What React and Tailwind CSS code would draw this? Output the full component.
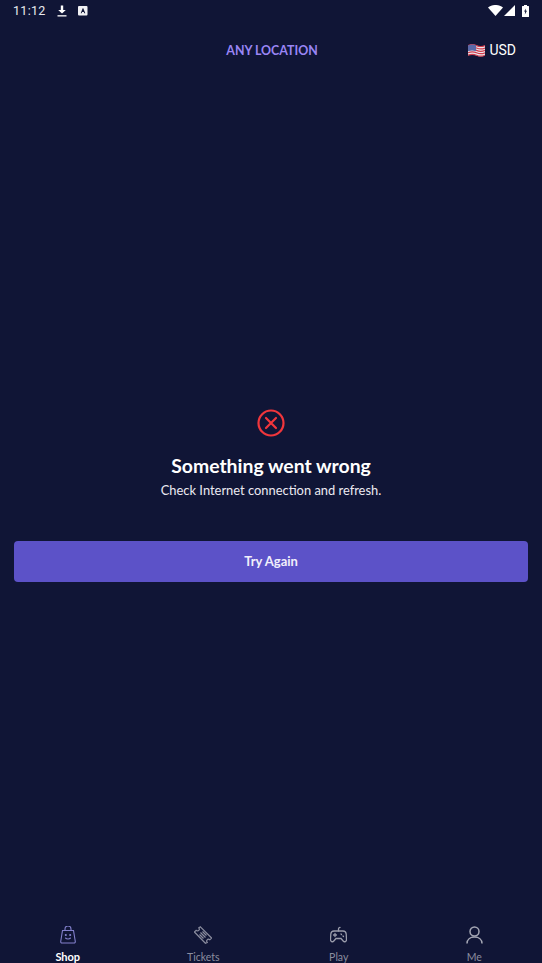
const font = { fontFamily: 'Lato, sans-serif' };

function StatusBar() {
  return (
    <div className="h-[21px] flex items-center justify-between px-[13px] text-white">
      <div className="flex items-center">
        <span className="text-[12.5px] leading-[21px] tracking-[0.3px] font-['Roboto',sans-serif] text-[#e8e9ee]">11:12</span>
        <svg width="10" height="12" viewBox="0 0 10 12" className="ml-[11px]">
          <path d="M3.8 0.5h2.4v4.5h2.6L5 8.6 1.2 5h2.6z" fill="#fff" />
          <rect x="0.5" y="10.2" width="9" height="1.3" fill="#fff" />
        </svg>
        <svg width="10" height="10" viewBox="0 0 10 10" className="ml-[11px]">
          <rect width="9.5" height="9.5" rx="1" fill="#f1f1f4" />
          <path d="M2.7 7.2 4.7 2.2h.6l2 5H6.2l-.4-1.1H4.1l-.4 1.1z" fill="#101536" />
        </svg>
      </div>
      <div className="flex items-center">
        <svg width="15" height="11" viewBox="0 0 15 11">
          <path d="M0 2.600C4.200-.9 10.800-.9 15 2.600L7.500 11z" fill="#fff" />
        </svg>
        <svg width="11" height="11" viewBox="0 0 11 11" className="ml-[1px]">
          <path d="M11 0v11H0z" fill="#fff" />
        </svg>
        <svg width="7" height="12" viewBox="0 0 7 12" className="ml-[7px]">
          <path d="M2 0h3v1h1.500a.5.5 0 0 1 .5.5v10a.5.5 0 0 1-.5.5H.5a.5.5 0 0 1-.5-.5v-10A.5.5 0 0 1 .5 1H2z" fill="#fff" />
          <path d="M4 3.500 2 6.500h1.200L2.800 9.500 5 5.700H3.700z" fill="#101536" />
        </svg>
      </div>
    </div>
  );
}

function Flag() {
  const stripes = [1.6, 4, 6.4, 8.8, 11.2];
  return (
    <svg width="17" height="13" viewBox="0 0 17 13" fill="none">
      <path d="M0 1.500Q4.200-.3 8.500 1.500T17 1.500V11.500Q12.800 13.300 8.500 11.500T0 11.500z" fill="#ece6ea" />
      {stripes.map((y) => (
        <path key={y} d={`M0 ${y}Q4.200 ${y - 1.8} 8.500 ${y}T17 ${y}`} stroke="#cf3a4c" strokeWidth="1.200" />
      ))}
      <path d="M0 1.500Q4-.2 8 1.300V7.200Q4 5.700 0 7.200z" fill="#5a69a8" />
    </svg>
  );
}

function ShopIcon() {
  return (
    <svg width="16" height="18" viewBox="0 0 16 18" fill="none" stroke="#8380cc" strokeWidth="1.100">
      <path d="M2.500 4.500h11L15.300 15.500a1.300 1.300 0 0 1-1.300 1.500H2a1.300 1.300 0 0 1-1.300-1.500z" />
      <path d="M5 4.500V3a3 3 0 0 1 6 0v1.500" />
      <path d="M5.500 12c1.300 1.200 3.700 1.200 5 0" strokeLinecap="round" />
      <circle cx="5.800" cy="9" r=".5" fill="#8380cc" />
      <circle cx="10.200" cy="9" r=".5" fill="#8380cc" />
    </svg>
  );
}

function TicketIcon() {
  return (
    <svg width="18" height="18" viewBox="0 0 18 18" fill="none" stroke="#8b8d9f" strokeWidth="1.200">
      <path d="M6 .8 17.200 12l-1.800 1.800c-.9-.7-2-.6-2.600 0-.7.7-.7 1.700 0 2.600L11 17.200-.0 6l1.800-1.600c.9.7 2 .6 2.600 0 .7-.7.7-1.700 0-2.600z" transform="translate(.4 0)" />
      <path d="m6.500 6.500 5 5M5.500 8.500l4 4M8.500 5.500l4 4" />
    </svg>
  );
}

function PlayIcon() {
  return (
    <svg width="17" height="18" viewBox="0 0 17 18" fill="none" stroke="#9a9cab" strokeWidth="1.300" strokeLinecap="round">
      <path d="M4 5h9c1.800 0 3 1.300 3.200 3l.3 5.500c.1 2-2 3-3.300 1.500L11 12.500H6L3.800 15C2.500 16.500.4 15.500.5 13.500L.8 8C1 6.300 2.200 5 4 5z" />
      <path d="M8.500 5V3.200c0-1.200.6-1.800 1.500-1.800" />
      <path d="M3.500 9h3M5 7.500v3M11 8l.5.500M13 10l.5.500" />
    </svg>
  );
}

function MeIcon() {
  return (
    <svg width="17" height="18" viewBox="0 0 17 18" fill="none" stroke="#a4a6b4" strokeWidth="1.500">
      <circle cx="8.500" cy="5.500" r="4.500" />
      <path d="M1 17.500c0-4 3.200-6.500 7.500-6.500s7.500 2.500 7.500 6.500" />
    </svg>
  );
}

const tabs = [
  { label: 'Shop', icon: <ShopIcon />, active: true },
  { label: 'Tickets', icon: <TicketIcon /> },
  { label: 'Play', icon: <PlayIcon /> },
  { label: 'Me', icon: <MeIcon /> },
];

export default function App() {
  return (
    <div style={font} className="w-[542px] h-[963px] bg-[#101536] flex flex-col overflow-hidden">
      <StatusBar />

      <div className="h-[55px] relative flex items-center justify-center pt-[6px] pl-[2px]">
        <span className="text-[#9a85f5] text-[12.4px] font-bold">ANY LOCATION</span>
        <div className="absolute right-[26px] top-[19px] flex items-center gap-[4px]">
          <Flag />
          <span className="text-white text-[14px] font-['Roboto',sans-serif]">USD</span>
        </div>
      </div>

      <div className="flex-1 flex flex-col items-center px-[14px] pt-[333px]">
        <svg width="28" height="28" viewBox="0 0 28 28" fill="none" stroke="#f0363c" strokeWidth="2.200" strokeLinecap="round">
          <circle cx="14" cy="14" r="12.500" />
          <path d="m9 9 10 10M19 9 9 19" />
        </svg>
        <h1 className="text-white text-[19.4px] font-bold leading-[24px] mt-[17px]">Something went wrong</h1>
        <p className="text-[#eceaf2] text-[12.9px] leading-[18px] mt-[3px]">Check Internet connection and refresh.</p>
        <button className="w-full h-[41px] mt-[42px] pt-[1px] bg-[#5c52c8] rounded-[4px] text-[#f1effb] text-[13px] font-bold">
          Try Again
        </button>
      </div>

      <div className="grid grid-cols-4 h-[37px]">
        {tabs.map((tab) => (
          <div key={tab.label} className="flex flex-col items-center">
            <div className="h-[18px] flex items-center">{tab.icon}</div>
            <span className={tab.active ? 'text-white text-[11px] font-bold leading-[14px] mt-[6px]' : 'text-[#8b8d9f] text-[10.5px] leading-[14px] mt-[6px]'}>
              {tab.label}
            </span>
          </div>
        ))}
      </div>
    </div>
  );
}
